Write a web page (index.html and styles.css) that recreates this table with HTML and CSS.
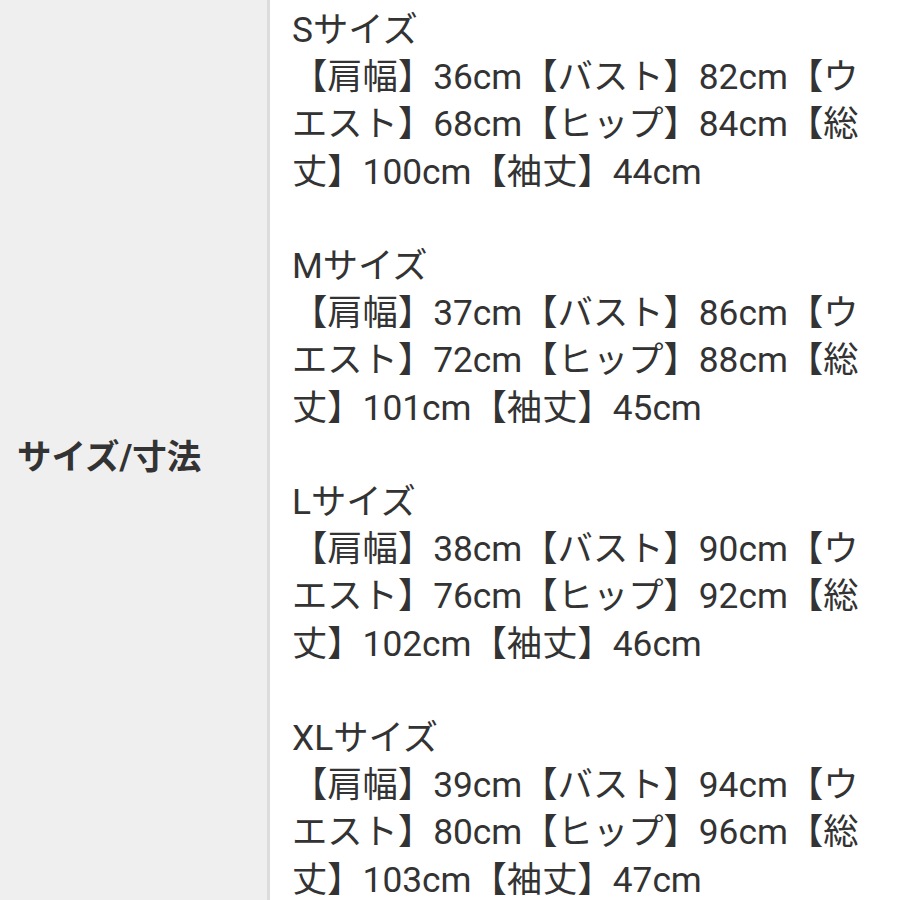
FILE: index.html
```html
<!DOCTYPE html>
<html lang="ja">
<head>
<meta charset="utf-8">
<link rel="stylesheet" href="styles.css">
</head>
<body>
<div class="table">
  <div class="label">サイズ/寸法</div>
  <div class="value">Sサイズ<br>【肩幅】36cm【バスト】82cm【ウエスト】68cm【ヒップ】84cm【総丈】100cm【袖丈】44cm<br><br>Mサイズ<br>【肩幅】37cm【バスト】86cm【ウエスト】72cm【ヒップ】88cm【総丈】101cm【袖丈】45cm<br><br>Lサイズ<br>【肩幅】38cm【バスト】90cm【ウエスト】76cm【ヒップ】92cm【総丈】102cm【袖丈】46cm<br><br>XLサイズ<br>【肩幅】39cm【バスト】94cm【ウエスト】80cm【ヒップ】96cm【総丈】103cm【袖丈】47cm</div>
</div>
</body>
</html>
```

FILE: styles.css
```css
html, body {
  margin: 0;
  padding: 0;
  background: #fff;
}
body {
  font-family: Roboto, "Noto Sans CJK JP", sans-serif;
  color: #333;
}
.table {
  display: grid;
  grid-template-columns: 270px 1fr;
  min-height: 920px;
}
.label {
  background: #efefef;
  border-right: 3px solid #dcdcdc;
  display: flex;
  align-items: center;
  padding-left: 17px;
  font-weight: bold;
  font-size: 34.5px;
  line-height: 47px;
  padding-bottom: 6px;
}
.value {
  padding: 7px 28px 14px 22px;
  font-size: 35.3px;
  line-height: 47.2px;
  word-break: break-all;
}
```
